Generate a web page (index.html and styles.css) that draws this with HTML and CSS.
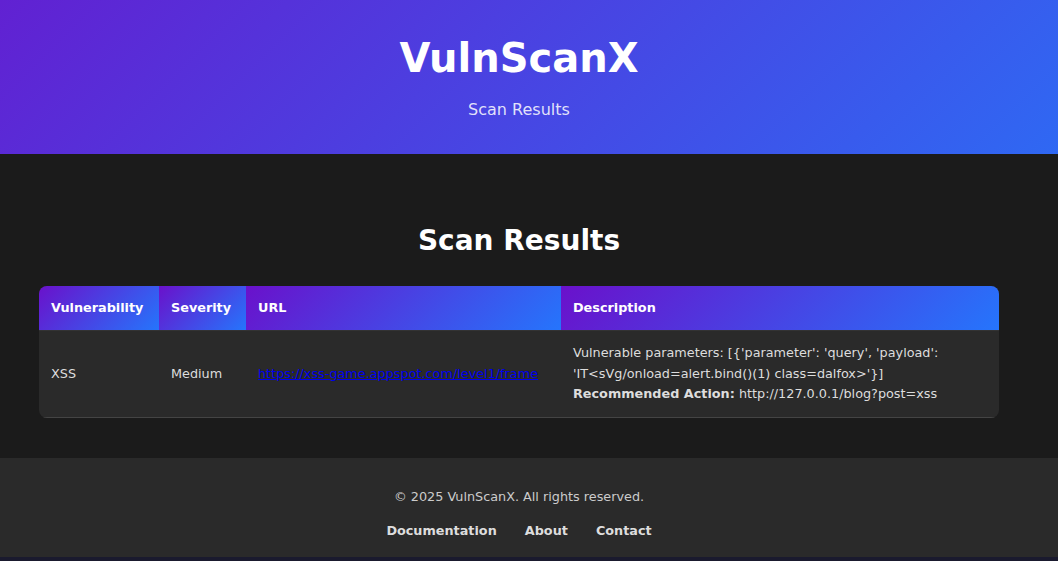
FILE: index.html
```html
<!DOCTYPE html>
<html lang="en">
<head>
<meta charset="utf-8">
<title>VulnScanX - Scan Results</title>
<link rel="stylesheet" href="styles.css">
</head>
<body>
<header class="site-header">
  <h1 class="brand">VulnScanX</h1>
  <p class="tagline">Scan Results</p>
</header>
<main class="main">
  <h2 class="section-title">Scan Results</h2>
  <table class="results">
    <thead>
      <tr>
        <th class="col-vuln">Vulnerability</th>
        <th class="col-sev">Severity</th>
        <th class="col-url">URL</th>
        <th class="col-desc">Description</th>
      </tr>
    </thead>
    <tbody>
      <tr>
        <td>XSS</td>
        <td>Medium</td>
        <td><a href="#">https://xss-game.appspot.com/level1/frame</a></td>
        <td>Vulnerable parameters: [{'parameter': 'query', 'payload': 'IT&lt;sVg/onload=alert.bind()(1) class=dalfox&gt;'}]<br><strong>Recommended Action:</strong> http://127.0.0.1/blog?post=xss</td>
      </tr>
    </tbody>
  </table>
</main>
<footer class="site-footer">
  <p class="copyright">© 2025 VulnScanX. All rights reserved.</p>
  <nav class="footer-links">
    <a href="#">Documentation</a>
    <a href="#">About</a>
    <a href="#">Contact</a>
  </nav>
</footer>
</body>
</html>
```

FILE: styles.css
```css
* {
  box-sizing: border-box;
}

html, body {
  margin: 0;
  padding: 0;
}

body {
  background: #1a1a2e;
  font-family: "DejaVu Sans", sans-serif;
  color: #dddddd;
  line-height: 1.6;
}

.site-header {
  background: linear-gradient(135deg, #6121d2 0%, #2f68f3 100%);
  padding: 34px 20px 31px 0;
  text-align: center;
  color: #ffffff;
}

.brand {
  margin: 0;
  font-size: 40px;
  line-height: 48px;
  font-weight: bold;
}

.tagline {
  margin: 15px 0 0;
  font-size: 16px;
  line-height: 25.6px;
  color: rgba(255, 255, 255, 0.85);
}

.main {
  background: #1b1b1b;
  padding: 70px 59px 40px 39px;
}

.section-title {
  margin: 0 0 29px;
  font-size: 28px;
  line-height: 33px;
  text-align: center;
  color: #ffffff;
}

.results {
  width: 100%;
  table-layout: fixed;
  border-collapse: separate;
  border-spacing: 0;
  border-radius: 8px;
  overflow: hidden;
  background: #2a2a2a;
  font-size: 12.8px;
  line-height: 20.48px;
}

.results th {
  background: linear-gradient(135deg, #6a11cb 0%, #2575fc 100%);
  color: #ffffff;
  text-align: left;
  font-weight: bold;
  padding: 12px;
}

.col-vuln { width: 120px; }
.col-sev { width: 87px; }
.col-url { width: 315px; }
.col-desc { width: 438px; }

.results td {
  padding: 12px;
  color: #dddddd;
  vertical-align: middle;
  border-top: 1px solid #333333;
  border-bottom: 1px solid #444444;
}

.results td a {
  color: #0000ee;
}

.results td strong {
  font-weight: bold;
}

.site-footer {
  background: #2a2a2a;
  padding: 29px 20px 15px 0;
  text-align: center;
  font-size: 12.8px;
  line-height: 20.48px;
}

.copyright {
  margin: 0 0 14px;
  color: #cccccc;
}

.footer-links {
  display: flex;
  justify-content: center;
  gap: 28px;
}

.footer-links a {
  color: #dddddd;
  font-weight: bold;
  text-decoration: none;
}
```
